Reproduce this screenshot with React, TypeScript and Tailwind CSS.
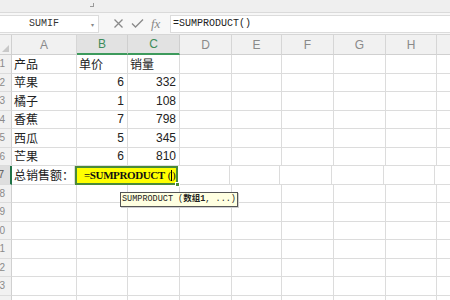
import React from "react";

const cols = [
  { k: "A", w: 65 },
  { k: "B", w: 51 },
  { k: "C", w: 52 },
  { k: "D", w: 52 },
  { k: "E", w: 50 },
  { k: "F", w: 52 },
  { k: "G", w: 52 },
  { k: "H", w: 51 },
  { k: "", w: 40 },
];

const data: (string | number)[][] = [
  ["产品", "单价", "销量"],
  ["苹果", 6, 332],
  ["橘子", 1, 108],
  ["香蕉", 7, 798],
  ["西瓜", 5, 345],
  ["芒果", 6, 810],
];

const cjk = { fontFamily: '"Noto Sans CJK SC", "Noto Sans", sans-serif' };
const sans = { fontFamily: '"Liberation Sans", Arial, sans-serif' };
const mono = { fontFamily: '"Liberation Mono", "Noto Sans CJK SC", monospace' };

function RowHeader({ n, active }: { n: number; active?: boolean }) {
  return (
    <div
      className={`w-[12px] shrink-0 h-full overflow-hidden flex items-center justify-end pr-[6px] border-b border-[#dcdcdc] text-[10px] ${
        active ? "bg-[#dedede] border-r-2 border-r-[#217346] text-[#555]" : "bg-[#f1f1f1] border-r border-r-[#d0d0d0] text-[#8a8a8a]"
      }`}
      style={sans}
    >
      <span className="whitespace-nowrap">{n}</span>
    </div>
  );
}

export default function App() {
  return (
    <div className="relative w-[450px] h-[300px] overflow-hidden bg-white flex flex-col select-none">
      {/* top ribbon strip */}
      <div className="h-[13px] shrink-0 bg-[#efefef] border-b border-[#dadada] relative">
        <div className="absolute left-[90px] top-[3px] w-[4px] h-[4px] border-r border-b border-[#9a9a9a]" />
      </div>
      {/* formula bar */}
      <div className="h-[22px] shrink-0 bg-[#f7f7f7] flex items-center border-b border-[#d6d6d6]">
        <div className="w-[99px] h-[18px] bg-white border border-[#dcdcdc] border-l-0 flex items-center relative">
          <span className="flex-1 text-center text-[10px] text-[#333] pr-[10px]" style={mono}>SUMIF</span>
          <span className="absolute right-[4px] top-[5px] text-[6px] text-[#888]">▾</span>
        </div>
        <div className="w-[71px] flex items-center justify-around pl-[10px] pr-[6px] text-[#8a8a8a]">
          <svg width="11" height="11" viewBox="0 0 11 11">
            <path d="M1.5 1.5 L9.5 9.5 M9.5 1.5 L1.5 9.5" stroke="#8a8a8a" strokeWidth="1.3" fill="none" />
          </svg>
          <svg width="13" height="11" viewBox="0 0 13 11">
            <path d="M1 5.5 L4.5 9 L12 1.5" stroke="#8a8a8a" strokeWidth="1.3" fill="none" />
          </svg>
          <span className="italic text-[13px] text-[#888]" style={{ fontFamily: '"Liberation Serif", serif' }}>fx</span>
        </div>
        <div className="flex-1 h-[18px] bg-white border border-[#dcdcdc] border-r-0 flex items-center pl-[2px]">
          <span className="text-[10px] text-[#222]" style={mono}>=SUMPRODUCT()</span>
        </div>
      </div>
      {/* column header */}
      <div className="h-[20px] shrink-0 flex bg-[#f1f1f1]">
        <div className="w-[12px] shrink-0 h-full border-r border-b border-[#d0d0d0] relative">
          <div className="absolute right-[2px] bottom-[2px] w-0 h-0 border-l-[7px] border-l-transparent border-b-[7px] border-b-[#c8c8c8]" />
        </div>
        {cols.map((c, i) => {
          const act = c.k === "B" || c.k === "C";
          return (
            <div
              key={i}
              style={{ width: c.w, ...sans }}
              className={`shrink-0 h-full flex items-center justify-center text-[12px] border-r ${
                act
                  ? "bg-[#e2e2e2] text-[#3d8c5a] border-r-[#cfcfcf] border-b-2 border-b-[#3d9a5c]"
                  : "text-[#8a8a8a] border-r-[#d6d6d6] border-b border-b-[#d0d0d0]"
              }`}
            >
              {c.k}
            </div>
          );
        })}
      </div>
      {/* rows */}
      {Array.from({ length: 14 }).map((_, i) => {
        const n = i + 1;
        const row = data[i];
        if (n === 7) {
          return (
            <div key={n} className="h-[18.5px] shrink-0 flex">
              <RowHeader n={n} active />
              <div
                className="w-[63px] shrink-0 h-full border-r border-b border-[#dcdcdc] flex items-center pl-[2px] text-[12px] text-[#222]"
                style={cjk}
              >
                总销售额：
              </div>
              <div className="w-[103px] shrink-0 h-full bg-[#ffff00] border-2 border-[#4a8a3a] relative flex items-center pl-[7px]">
                <span
                  className="whitespace-nowrap text-[11px] font-bold text-[#111] tracking-[-0.4px] flex items-center"
                  style={{ fontFamily: '"Liberation Serif", serif' }}
                >
                  =SUMPRODUCT
                  <span className="ml-[3px] font-normal">(</span>
                  <span className="inline-block w-[1px] h-[11px] bg-black" />
                  <span className="font-normal">)</span>
                </span>
                <div className="absolute right-[-4px] bottom-[-4px] w-[5px] h-[5px] bg-[#4a8a3a] border border-white" />
              </div>
              {cols.slice(3).map((c, k) => (
                <div key={k} style={{ width: c.w }} className="shrink-0 h-full border-r border-b border-[#dcdcdc]" />
              ))}
            </div>
          );
        }
        return (
          <div key={n} className="h-[18.5px] shrink-0 flex">
            <RowHeader n={n} />
            {cols.map((c, ci) => {
              const v = row ? row[ci] : undefined;
              const isNum = typeof v === "number";
              return (
                <div
                  key={ci}
                  style={{ width: c.w, ...(isNum ? sans : cjk) }}
                  className={`shrink-0 h-full border-r border-b border-[#dcdcdc] flex items-center text-[12px] text-[#222] overflow-hidden whitespace-nowrap ${
                    isNum ? "justify-end pr-[3px]" : "pl-[2px]"
                  }`}
                >
                  {v}
                </div>
              );
            })}
          </div>
        );
      })}
      {/* tooltip */}
      <div
        className="absolute left-[120px] top-[192px] h-[15px] px-[1px] bg-[#ffffe1] border border-[#555] flex items-center text-[8.5px] text-[#222] whitespace-nowrap shadow-[1px_1px_0_#cfcfcf]"
        style={mono}
      >
        SUMPRODUCT (<b>数组1</b>, ...)
      </div>
    </div>
  );
}
